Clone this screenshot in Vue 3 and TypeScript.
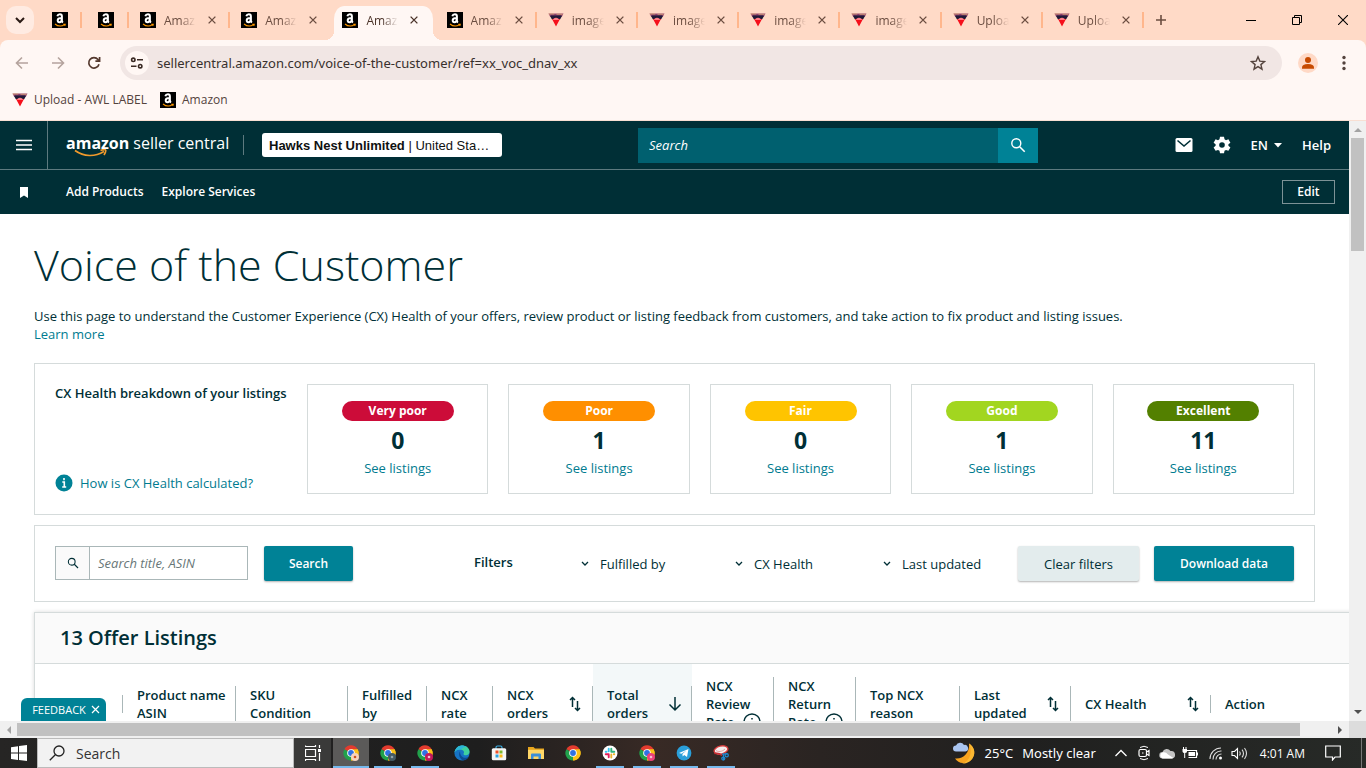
<script setup lang="ts">
import { ref } from 'vue'

interface Tab { title: string; icon: 'amazon' | 'label'; active?: boolean }
interface Rating { name: string; count: number; tone: string }
interface Column { lines: string[]; width: number; sort?: 'both' | 'down'; info?: boolean; selected?: boolean }
interface TaskApp { name: string; icon: string; open?: boolean; focused?: boolean; badge?: string; letter?: string }

const tabs: Tab[] = [
  { title: 'Amaz', icon: 'amazon' },
  { title: 'Amaz', icon: 'amazon' },
  { title: 'Amaz', icon: 'amazon', active: true },
  { title: 'Amaz', icon: 'amazon' },
  { title: 'image', icon: 'label' },
  { title: 'image', icon: 'label' },
  { title: 'image', icon: 'label' },
  { title: 'image', icon: 'label' },
  { title: 'Uploa', icon: 'label' },
  { title: 'Uploa', icon: 'label' },
]

const ratings: Rating[] = [
  { name: 'Very poor', count: 0, tone: 'very-poor' },
  { name: 'Poor', count: 1, tone: 'poor' },
  { name: 'Fair', count: 0, tone: 'fair' },
  { name: 'Good', count: 1, tone: 'good' },
  { name: 'Excellent', count: 11, tone: 'excellent' },
]

const columns: Column[] = [
  { lines: [''], width: 88 },
  { lines: ['Product name', 'ASIN'], width: 113 },
  { lines: ['SKU', 'Condition'], width: 112 },
  { lines: ['Fulfilled', 'by'], width: 79 },
  { lines: ['NCX', 'rate'], width: 66 },
  { lines: ['NCX', 'orders'], width: 100, sort: 'both' },
  { lines: ['Total', 'orders'], width: 99, sort: 'down', selected: true },
  { lines: ['NCX', 'Review', 'Rate'], width: 82, info: true },
  { lines: ['NCX', 'Return', 'Rate'], width: 82, info: true },
  { lines: ['Top NCX', 'reason'], width: 104 },
  { lines: ['Last', 'updated'], width: 111, sort: 'both' },
  { lines: ['CX Health'], width: 140, sort: 'both' },
  { lines: ['Action'], width: 172 },
]

const apps: TaskApp[] = [
  { name: 'Chrome, first profile', icon: 'chrome', open: true, focused: true, badge: '#f6d3bd', letter: '#c8501e' },
  { name: 'Chrome, second profile', icon: 'chrome', open: true, badge: '#455a64', letter: '#90a4ae' },
  { name: 'Chrome, third profile', icon: 'chrome', open: true, badge: '#c2185b', letter: '#f8bbd0' },
  { name: 'Edge', icon: 'edge' },
  { name: 'Store', icon: 'store' },
  { name: 'File Explorer', icon: 'folder' },
  { name: 'Chrome', icon: 'chrome' },
  { name: 'Slack', icon: 'slack', open: true },
  { name: 'Chrome, fourth profile', icon: 'chrome', open: true, badge: '#ec407a', letter: '#f8bbd0' },
  { name: 'Telegram', icon: 'telegram', open: true },
  { name: 'Snipping Tool', icon: 'snip', open: true },
]

const filters = ['Fulfilled by', 'CX Health', 'Last updated']
const address = ref('sellercentral.amazon.com/voice-of-the-customer/ref=xx_voc_dnav_xx')
const siteQuery = ref('')
const listingQuery = ref('')
</script>

<template>
  <svg class="defs" aria-hidden="true">
    <symbol id="i-amazon" viewBox="0 0 16 16">
      <rect width="16" height="16" fill="#000" />
      <path d="M9.700 6.100c-2.800 0-4 .7-4 2.200 0 1.200.8 1.900 1.800 1.900 1.300 0 2.200-1 2.200-2.600zM5.300 4.300C5.700 2.900 6.600 2.300 7.900 2.300c1.500 0 2 .7 2 2.200v4c0 1 .3 1.500 1.100 2" fill="none" stroke="#fff" stroke-width="2" />
      <path d="M3 12c3 2.400 6.800 2.400 9.600.6M11.300 12.200h1.900l-.4 1.600" fill="none" stroke="#f90" stroke-width="1.100" />
    </symbol>
    <symbol id="i-label" viewBox="0 0 16 16">
      <path d="M.5 1.500h15L14 4.500H2z" fill="#9a4570" />
      <path d="M2 4h12l-1.800 3.200H3.800z" fill="#211936" />
      <path d="M.8 2h5.500M8.500 2.300h6" stroke="#dba878" stroke-width=".9" />
      <path d="M2.500 3.400h11" stroke="#33204a" stroke-width=".8" />
      <path d="M4 7h8l-4 7.500z" fill="#f5101c" />
      <path d="M5.200 7q2.800-2.500 5.600 0v1H5.200z" fill="#ff7d86" />
    </symbol>
    <symbol id="i-close" viewBox="0 0 16 16">
      <path d="M3.500 3.500l9 9M12.500 3.500l-9 9" stroke="currentColor" stroke-width="1.800" />
    </symbol>
    <symbol id="i-search" viewBox="0 0 16 16">
      <circle cx="6.300" cy="6.300" r="4.500" fill="none" stroke="currentColor" stroke-width="1.400" />
      <path d="M9.700 9.700l5 5" stroke="currentColor" stroke-width="1.600" />
    </symbol>
    <symbol id="i-sort" viewBox="0 0 12 16">
      <path d="M3.500 11V1.500M1 4l2.500-2.500L6 4M8.500 5v9.500M6 12l2.500 2.500L11 12" fill="none" stroke="currentColor" stroke-width="1.500" />
    </symbol>
    <symbol id="i-down" viewBox="0 0 14 16">
      <path d="M7 1v13M1.500 8.500L7 14l5.500-5.500" fill="none" stroke="currentColor" stroke-width="1.500" />
    </symbol>
    <symbol id="i-chrome" viewBox="0 0 16 16">
      <path d="M8 8L1.400 4.200A7.600 7.600 0 0 1 14.600 4.200z" fill="#e33b2e" />
      <path d="M8 8l6.600-3.800A7.600 7.600 0 0 1 8 15.600z" fill="#fbc116" />
      <path d="M8 8v7.600A7.600 7.600 0 0 1 1.400 4.200z" fill="#21a14b" />
      <path d="M8 4.300h6.600A7.600 7.600 0 0 1 8 15.600l3.300-5.700z" fill="#fbc116" />
      <circle cx="8" cy="8" r="3.800" fill="#fff" />
      <circle cx="8" cy="8" r="2.900" fill="#2f72e4" />
    </symbol>
    <symbol id="i-edge" viewBox="0 0 16 16">
      <circle cx="8" cy="8" r="7.600" fill="#1673c4" />
      <path d="M.5 7.500C1.300 3.200 4.300.4 8 .4c4.200 0 7.600 2.800 7.600 6.200 0 2.300-1.700 3.700-3.700 3.700-1.400 0-2.400-.6-2.400-1.300 0-.5.5-.8.500-1.700C10 5.500 8 4.500 5.900 4.500 3.400 4.500 1.300 5.700.5 7.500z" fill="#3fd0a0" />
      <path d="M.5 7.500C1.300 3.200 4.300.4 8 .4c2 0 3.700.6 5 1.600C8 1.500 9 4.500 5.900 4.500 3.400 4.500 1.300 5.700.5 7.500z" fill="#2bb5d8" />
      <path d="M6 6.500C4 9 5.500 13.500 9 15.500c2.500-.2 4.500-1.400 5.700-3.400-1.500.8-3.600 1-5.400.3C7.300 11.500 6 9.500 6 6.500z" fill="#0c4b93" />
    </symbol>
    <symbol id="i-store" viewBox="0 0 16 16">
      <path d="M5 4V2.500q0-1.500 1.500-1.500h3q1.500 0 1.500 1.500V4" fill="none" stroke="#3bb1e8" stroke-width="1.200" />
      <rect x=".8" y="3.300" width="14.400" height="12" rx="1.500" fill="#f5f5f5" />
      <path d="M4.500 5.500h3v3h-3z" fill="#f0522a" /><path d="M8.500 5.500h3v3h-3z" fill="#7db92c" />
      <path d="M4.500 9.500h3v3h-3z" fill="#2aa4e4" /><path d="M8.500 9.500h3v3h-3z" fill="#fbb917" />
    </symbol>
    <symbol id="i-folder" viewBox="0 0 16 16">
      <path d="M0 2h5.500L7 3.500h9V14H0z" fill="#e8a51c" />
      <path d="M0 4.800h16V14H0z" fill="#ffd767" />
      <path d="M3 14V9.500q0-1 1-1h8q1 0 1 1V14h-2.500v-2.500h-5V14z" fill="#3d8fd8" />
    </symbol>
    <symbol id="i-slack" viewBox="0 0 16 16">
      <circle cx="8" cy="8" r="7.500" fill="#fff" />
      <g fill="none" stroke-width="1.900" stroke-linecap="round">
        <path d="M6.700 3.700v2.500M3.700 6.700h.8" stroke="#36c5f0" />
        <path d="M9.300 6.700h3M9.300 3.700v3" stroke="#2eb67d" />
        <path d="M9.300 9.500v3M12.300 9.300h-.5" stroke="#ecb22e" />
        <path d="M6.700 9.300h-3M6.700 9.300v3" stroke="#e01e5a" />
      </g>
    </symbol>
    <symbol id="i-telegram" viewBox="0 0 16 16">
      <circle cx="8" cy="8" r="7.400" fill="#2a9fda" />
      <path d="M3 8l9.500-3.900-1.500 8-2.800-2-1.500 1.500-.3-2.500 4-3.500-5 3.100z" fill="#fff" />
    </symbol>
    <symbol id="i-snip" viewBox="0 0 16 16">
      <ellipse cx="8" cy="5" rx="7" ry="4" fill="#f6eeee" stroke="#d63c3c" stroke-width="1.400" transform="rotate(-14 8 5)" />
      <path d="M3 5.500c2 1.500 6 1.500 9-1.500" fill="none" stroke="#e2a0a0" stroke-width="1" />
      <path d="M1.500 8.500C4 8 7 8.500 9 10.500" fill="none" stroke="#c62f36" stroke-width="1.500" />
      <path d="M10.500 8.500v6.500M9 9.200l5.500-.4" stroke="#1e88d0" stroke-width="1.300" />
      <circle cx="13.700" cy="10.300" r="1.600" fill="none" stroke="#1e88d0" stroke-width="1.300" />
      <circle cx="10.300" cy="13.600" r="1.500" fill="none" stroke="#1e88d0" stroke-width="1.300" />
    </symbol>
  </svg>

  <div class="desktop">
    <header class="browser">
      <div class="strip">
        <button class="tab-menu" aria-label="Search tabs">
          <svg width="10" height="8" viewBox="0 0 10 8"><path d="M1 2l4 4 4-4" fill="none" stroke="currentColor" stroke-width="2" /></svg>
        </button>
        <div class="pinned"><svg class="fav"><use href="#i-amazon" /></svg></div>
        <div class="pinned"><svg class="fav"><use href="#i-amazon" /></svg></div>
        <div class="tabs">
          <div v-for="(tab, i) in tabs" :key="i" class="tab" :class="{ active: tab.active, bare: tabs[i + 1]?.active }">
            <svg class="fav"><use :href="'#i-' + tab.icon" /></svg>
            <span class="tab-title">{{ tab.title }}</span>
            <button class="tab-close" aria-label="Close tab"><svg><use href="#i-close" /></svg></button>
          </div>
        </div>
        <div class="window-side">
          <button class="new-tab" aria-label="New tab">
            <svg width="12" height="12" viewBox="0 0 12 12"><path d="M6 1v10M1 6h10" stroke="currentColor" stroke-width="1.600" /></svg>
          </button>
          <div class="window-buttons">
            <button aria-label="Minimize"><svg width="10" height="10" viewBox="0 0 10 10"><path d="M0 5.500h10" stroke="#000" /></svg></button>
            <button aria-label="Restore"><svg width="10" height="10" viewBox="0 0 10 10"><path d="M.5 2.500h7v7h-7zM2.500 2.500v-2h7v7h-2" fill="none" stroke="#000" /></svg></button>
            <button aria-label="Close window"><svg width="10" height="10" viewBox="0 0 10 10"><path d="M0 0l10 10M10 0L0 10" stroke="#000" stroke-width="1.100" /></svg></button>
          </div>
        </div>
      </div>

      <div class="toolbar">
        <div class="nav-buttons">
          <button class="dim" aria-label="Back"><svg width="14" height="14" viewBox="0 0 14 14"><path d="M13 7H2M7 1.500L1.500 7 7 12.500" fill="none" stroke="currentColor" stroke-width="1.600" /></svg></button>
          <button class="dim" aria-label="Forward"><svg width="14" height="14" viewBox="0 0 14 14"><path d="M1 7h11M7 1.500L12.500 7 7 12.500" fill="none" stroke="currentColor" stroke-width="1.600" /></svg></button>
          <button aria-label="Reload"><svg width="14" height="14" viewBox="0 0 14 14"><path d="M12 8.200A5.200 5.200 0 1 1 11 3.500l1.300 1.300M12.600 1v4.200H8.400" fill="none" stroke="currentColor" stroke-width="1.700" /></svg></button>
        </div>
        <div class="omnibox">
          <button class="site-info" aria-label="Site information">
            <svg width="14" height="14" viewBox="0 0 14 14"><g fill="none" stroke="#3a2a24" stroke-width="1.600"><circle cx="3.300" cy="3.800" r="1.700" /><path d="M7 3.800h6M1 10.200h5.500" /><circle cx="10.200" cy="10.200" r="1.700" /></g></svg>
          </button>
          <input v-model="address" class="address" type="text" aria-label="Address" />
          <button class="star" aria-label="Bookmark this page">
            <svg width="16" height="16" viewBox="0 0 16 16"><path d="M8 1.800l1.800 4.300 4.700.4-3.600 3.100 1.100 4.600L8 11.700l-4 2.500 1.100-4.600L1.500 6.500l4.700-.4z" fill="none" stroke="#54433d" stroke-width="1.400" /></svg>
          </button>
        </div>
        <button class="profile" aria-label="Profile">
          <svg width="20" height="20" viewBox="0 0 20 20"><circle cx="10" cy="10" r="10" fill="#ffd9c6" /><circle cx="10" cy="7" r="3" fill="#c74a00" /><path d="M4 15.800v-1.300q0-3.500 6-3.500t6 3.500v1.300z" fill="#c74a00" /></svg>
        </button>
        <button class="kebab" aria-label="Menu">
          <svg width="4" height="16" viewBox="0 0 4 16"><g fill="#54433d"><circle cx="2" cy="2.500" r="1.700" /><circle cx="2" cy="8" r="1.700" /><circle cx="2" cy="13.500" r="1.700" /></g></svg>
        </button>
      </div>

      <nav class="bookmarks" aria-label="Bookmarks">
        <a href="#"><svg class="fav"><use href="#i-label" /></svg>Upload - AWL LABEL</a>
        <a href="#"><svg class="fav"><use href="#i-amazon" /></svg>Amazon</a>
      </nav>
    </header>

    <div class="viewport">
      <div class="view">
        <div class="masthead">
          <button class="burger" aria-label="Menu">
            <svg width="16" height="12" viewBox="0 0 16 12"><path d="M0 1.500h16M0 6h16M0 10.500h16" stroke="#fff" stroke-width="1.600" /></svg>
          </button>
          <a class="brand" href="#">
            <b>amazon</b><span>seller central</span>
            <svg class="smile" width="34" height="9" viewBox="0 0 34 9"><path d="M1 1.500c9 6.500 20 6.500 29 1M26.500 1.500q4-1.500 5-.5t-1.500 5" fill="none" stroke="#f09a2c" stroke-width="1.700" /></svg>
          </a>
          <button class="account"><b>Hawks Nest Unlimited</b> | United Sta…</button>
          <form class="site-search" role="search" @submit.prevent>
            <input v-model="siteQuery" type="text" placeholder="Search" aria-label="Search Seller Central" />
            <button aria-label="Search Seller Central"><svg width="16" height="16"><use href="#i-search" /></svg></button>
          </form>
          <div class="utilities">
            <button aria-label="Messages">
              <svg width="18" height="16" viewBox="0 0 18 16"><rect x=".5" y="1" width="17" height="14" rx="1.500" fill="#fff" /><path d="M2.500 3.500L9 9l6.500-5.500" fill="none" stroke="#002f36" stroke-width="1.600" /></svg>
            </button>
            <button aria-label="Settings">
              <svg width="18" height="18" viewBox="0 0 18 18"><path d="M7 .8h4l.5 2.500 1.500.9 2.400-.9 2 3.400-2 1.600v1.500l2 1.600-2 3.400-2.400-.9-1.500.9-.5 2.500H7l-.5-2.500-1.500-.9-2.400.9-2-3.400 2-1.600V8.300l-2-1.600 2-3.400 2.400.9 1.500-.9z" fill="#fff" /><circle cx="9" cy="9" r="2.800" fill="#002f36" /></svg>
            </button>
            <button class="lang">EN <svg width="8" height="5" viewBox="0 0 8 5"><path d="M0 0h8L4 4.500z" fill="#fff" /></svg></button>
            <a href="#">Help</a>
          </div>
        </div>
        <nav class="shortcuts" aria-label="Favorites">
          <svg class="flag" width="8" height="11" viewBox="0 0 8 11"><path d="M0 0h8v11L4 8.500 0 11z" fill="#fff" /></svg>
          <a href="#">Add Products</a>
          <a href="#">Explore Services</a>
          <button>Edit</button>
        </nav>

        <main>
          <h1>Voice of the Customer</h1>
          <p class="intro">Use this page to understand the Customer Experience (CX) Health of your offers, review product or listing feedback from customers, and take action to fix product and listing issues.<br /><a href="#">Learn more</a></p>

          <section class="panel health">
            <div class="health-lead">
              <h2>CX Health breakdown of your listings</h2>
              <a class="how" href="#">
                <svg width="18" height="18" viewBox="0 0 18 18"><circle cx="9" cy="9" r="8.500" fill="#008296" /><path d="M9 4v2.200M7.300 8H9.300v5M7.200 13h4" fill="none" stroke="#fff" stroke-width="1.600" /></svg>
                How is CX Health calculated?
              </a>
            </div>
            <div v-for="rating in ratings" :key="rating.name" class="card">
              <span class="pill" :class="rating.tone">{{ rating.name }}</span>
              <strong>{{ rating.count }}</strong>
              <a href="#">See listings</a>
            </div>
          </section>

          <section class="panel finder">
            <label class="listing-search">
              <span class="glass"><svg width="12" height="12"><use href="#i-search" /></svg></span>
              <input v-model="listingQuery" type="text" placeholder="Search title, ASIN" aria-label="Search title, ASIN" />
            </label>
            <button class="btn primary">Search</button>
            <b class="filters-title">Filters</b>
            <div class="filters">
              <label v-for="name in filters" :key="name" class="filter">
                <svg width="8" height="6" viewBox="0 0 8 6"><path d="M1 1l3 3 3-3" fill="none" stroke="#002f36" stroke-width="1.300" /></svg>
                <select :aria-label="name"><option>{{ name }}</option></select>
              </label>
            </div>
            <button class="btn plain">Clear filters</button>
            <button class="btn primary download">Download data</button>
          </section>

          <section class="listings">
            <h2>13 Offer Listings</h2>
            <table>
              <colgroup><col v-for="(col, i) in columns" :key="i" :style="{ width: col.width + 'px' }" /></colgroup>
              <thead>
                <tr>
                  <th v-for="(col, i) in columns" :key="i" scope="col" :class="{ selected: col.selected }">
                    <div class="head" :class="{ last: i === columns.length - 1 }">
                      <span class="head-text"><span v-for="line in col.lines" :key="line" class="line">{{ line }}</span></span>
                      <svg v-if="col.sort === 'both'" class="sort"><use href="#i-sort" /></svg>
                      <svg v-if="col.sort === 'down'" class="down"><use href="#i-down" /></svg>
                      <svg v-if="col.info" class="info" viewBox="0 0 18 18"><circle cx="9" cy="9" r="8" fill="none" stroke="currentColor" stroke-width="1.400" /><path d="M9 5v1.500M9 8v5.500" stroke="currentColor" stroke-width="1.500" /></svg>
                    </div>
                  </th>
                </tr>
              </thead>
            </table>
          </section>
        </main>
        <button class="feedback">FEEDBACK<svg width="9" height="9" viewBox="0 0 9 9"><path d="M1 1l7 7M8 1L1 8" stroke="#fff" stroke-width="1.200" /></svg></button>
      </div>

      <div class="scroll-y" aria-hidden="true">
        <svg width="8" height="4" viewBox="0 0 8 4"><path d="M0 4h8L4 0z" fill="#a3a3a3" /></svg>
        <i></i>
        <svg width="8" height="4" viewBox="0 0 8 4"><path d="M0 0h8L4 4z" fill="#505050" /></svg>
      </div>
      <div class="scroll-x" aria-hidden="true">
        <svg width="4" height="8" viewBox="0 0 4 8"><path d="M4 0v8L0 4z" fill="#a3a3a3" /></svg>
        <i></i>
        <svg width="4" height="8" viewBox="0 0 4 8"><path d="M0 0v8l4-4z" fill="#505050" /></svg>
      </div>
      <div class="corner"></div>
    </div>

    <footer class="taskbar">
      <button class="start" aria-label="Start">
        <svg width="16" height="16" viewBox="0 0 16 16"><path d="M0 2.200l7-1v6.400H0zM8 1.100L16 0v7.600H8zM0 8.500h7v6.400l-7-1zM8 8.500h8V16l-8-1.100z" fill="#fff" /></svg>
      </button>
      <label class="task-search">
        <svg width="16" height="16" viewBox="0 0 16 16"><circle cx="10" cy="6" r="5" fill="none" stroke="#222" stroke-width="1.300" /><path d="M6.300 9.700L.8 15.200" stroke="#222" stroke-width="1.300" /></svg>
        <input type="text" placeholder="Search" aria-label="Search Windows" />
      </label>
      <button class="task-view" aria-label="Task view">
        <svg width="16" height="16" viewBox="0 0 16 16"><path d="M.5 4.500h10v7H.5zM.5 2V.5M.5 1.500h10V0M.5 16v-1.500h10V16M14.500 0v3M14.500 8v8" fill="none" stroke="#fff" stroke-width="1.200" /><rect x="13" y="4" width="3" height="3" fill="#fff" /></svg>
      </button>
      <button v-for="app in apps" :key="app.name" class="app" :class="{ open: app.open, focused: app.focused }" :aria-label="app.name">
        <svg width="18" height="18" viewBox="0 0 18 18">
          <use :href="'#i-' + app.icon" x="1" y="1" width="16" height="16" />
          <template v-if="app.badge">
            <circle cx="13" cy="13" r="4" :fill="app.badge" />
            <circle cx="13" cy="13" r="1.300" :fill="app.letter" />
          </template>
        </svg>
      </button>
      <div class="tray">
        <button class="weather">
          <svg width="24" height="24" viewBox="0 0 24 24"><path d="M17 2.500A10.500 10.500 0 1 1 3 17.500C12 18.500 18 11 17 2.500z" fill="#f7a31f" /><path d="M17 2.500c5 3 7 9 4 14-2 4-7 6.500-11 6 8-2 11-12 7-20z" fill="#fbb832" /><path d="M4 10.500a3 3 0 0 1 0-6A4.500 4.500 0 0 1 12 4a3.300 3.300 0 0 1 1.500 6.500z" fill="#a9c4f0" /></svg>
          <span>25°C</span><span>Mostly clear</span>
        </button>
        <svg class="t1" width="12" height="8" viewBox="0 0 12 8"><path d="M.5 7L6 1.500 11.500 7" fill="none" stroke="#fff" stroke-width="1.300" /></svg>
        <svg class="t2" width="12" height="16" viewBox="0 0 12 16"><path d="M2 2.500q4-2.500 8 0M2 13.500q4 2.500 8 0" fill="none" stroke="#fff" /><rect x="1" y="4.500" width="7.500" height="7" rx="1.500" fill="none" stroke="#fff" stroke-width="1.200" /><path d="M8.500 7l2.500-1.500v5L8.500 9M4 8h1.500" fill="none" stroke="#fff" stroke-width="1.200" /></svg>
        <svg class="t3" width="16" height="11" viewBox="0 0 16 11"><path d="M3.500 10.500a3.200 3.200 0 0 1 0-6.400A4.500 4.500 0 0 1 11.500 3 3.800 3.800 0 0 1 13 10.500z" fill="#c4c4c4" /><path d="M3.500 10.500a3.200 3.200 0 0 1 .5-6.200q3-.5 5 2.200l5.500 3.500-1.500.5z" fill="#fff" /></svg>
        <svg class="t4" width="16" height="12" viewBox="0 0 16 12"><path d="M4.500 3.500h10v7h-8" fill="none" stroke="#fff" stroke-width="1.200" /><path d="M6.500 5h6.500v4H6.500zM15 5.500h1v3h-1zM.5 2h4.500v2.500q0 1.500-2.200 1.500T.5 4.500z" fill="#fff" /><path d="M1.500 0v2M4 0v2M2.700 6v5" stroke="#fff" /></svg>
        <svg class="t5" width="14" height="13" viewBox="0 0 14 13"><path d="M1 12A11 11 0 0 1 12 1M4 12.500A8 8 0 0 1 12.500 4M7 12.500A5.500 5.500 0 0 1 12.500 7" fill="none" stroke="#ddd" stroke-width="1.100" /><circle cx="11.500" cy="11" r="1.500" fill="#fff" /></svg>
        <svg class="t6" width="17" height="13" viewBox="0 0 17 13"><path d="M1 4.500h2.500L6.500 1.500v10l-3-3H1z" fill="none" stroke="#fff" stroke-width="1.100" /><path d="M8.500 4.500q1.500 2 0 4M11 2.700q3 3.800 0 7.600M13.500 1q4 5.500 0 11" fill="none" stroke="#ddd" stroke-width="1.100" /></svg>
        <span class="clock">4:01 AM</span>
        <svg class="note" width="16" height="16" viewBox="0 0 16 16"><path d="M.7 1h14.600v11H10l-2.500 3v-3H.7z" fill="none" stroke="#fff" stroke-width="1.200" /></svg>
        <i class="peek"></i>
      </div>
    </footer>
  </div>
</template>

<style>
body { margin: 0; overflow: hidden; }
</style>

<style scoped>
* { box-sizing: border-box; }
.defs { position: absolute; width: 0; height: 0; }
.desktop {
  --ui: "Open Sans", "Noto Sans", sans-serif;
  --wide: "Noto Sans", "Open Sans", sans-serif;
  display: flex; flex-direction: column; height: 100vh; overflow: hidden;
  font-family: var(--ui); background: #fff;
}
button, input, select { font: inherit; color: inherit; margin: 0; padding: 0; border: 0; background: none; outline: 0; }
button { display: inline-flex; align-items: center; justify-content: center; flex: none; }
svg { flex: none; display: block; }
a { text-decoration: none; color: inherit; }
.fav { width: 16px; height: 16px; }

.browser { flex: none; background: #ffdac7; border-bottom: 1px solid #f8dfd3; }
.strip { display: flex; height: 40px; }
.tab-menu { width: 28px; height: 28px; margin: 6px 2px 0 6px; border-radius: 10px; background: #ffebe2; color: #2a1a14; }
.pinned { width: 46px; display: flex; align-items: center; padding-left: 16px; background: linear-gradient(#ffb68c, #ffb68c) right center / 2px 16px no-repeat; }
.pinned + .pinned { width: 47px; }
.tabs { flex: 1; display: flex; min-width: 0; }
.tab { flex: 1; min-width: 0; display: flex; align-items: center; padding-left: 11px; color: #6b4d40; font-size: 12px; background: linear-gradient(#ffb68c, #ffb68c) right center / 2px 16px no-repeat; }
.tab.bare { background: none; }
.tab.active {
  position: relative; margin-top: 6px; padding-bottom: 6px; padding-left: 8px;
  border: solid transparent; border-width: 0 3px; border-radius: 13px 13px 0 0;
  background: #fff7f4; background-clip: padding-box; color: #4a3228;
}
.tab.active::before, .tab.active::after { content: ""; position: absolute; bottom: 0; width: 9px; height: 9px; }
.tab.active::before { right: 100%; background: radial-gradient(circle at 0 0, transparent 9px, #fff7f4 9px); }
.tab.active::after { left: 100%; background: radial-gradient(circle at 100% 0, transparent 9px, #fff7f4 9px); }
.tab-title { width: 32px; margin-left: 8px; white-space: nowrap; mask-image: linear-gradient(90deg, #000 50%, transparent); }
.tab-close { width: 16px; height: 16px; margin-left: 8px; }
.tab-close svg { width: 12px; height: 12px; }
.window-side { display: flex; width: 222px; justify-content: space-between; align-items: center; }
.new-tab { width: 34px; height: 34px; color: #6b4d40; }
.window-buttons { display: flex; }
.window-buttons button { width: 46px; height: 40px; }

.toolbar { display: flex; align-items: center; height: 46px; background: #fff7f4; border-radius: 8px 8px 0 0; }
.nav-buttons { display: flex; width: 120px; padding-left: 4px; }
.nav-buttons button { width: 36px; height: 36px; color: #54382d; }
.nav-buttons .dim { color: #b5a39d; }
.omnibox { flex: 1; min-width: 0; height: 34px; display: flex; align-items: center; border-radius: 17px; background: #f1e6e4; padding: 0 6px 0 5px; }
.site-info { width: 24px; height: 24px; border-radius: 50%; background: #fff7f4; }
.address { flex: 1; min-width: 0; margin-left: 8px; font-family: var(--wide); font-size: 13px; color: #38302d; }
.star { width: 36px; height: 24px; }
.profile { width: 52px; height: 34px; }
.kebab { width: 20px; height: 34px; margin-right: 12px; }
.bookmarks { display: flex; gap: 13px; height: 34px; padding: 0 12px 7px; background: #fff7f4; font-size: 12px; color: #54433d; }
.bookmarks a { display: flex; align-items: center; gap: 6px; }

.viewport { flex: 1; min-height: 0; display: grid; grid-template-columns: minmax(0, 1fr) 17px; grid-template-rows: minmax(0, 1fr) 17px; }
.view { position: relative; overflow: hidden; color: #002f36; font-size: 13px; line-height: 18px; background: #fff; }
.view a { color: #007b8f; }
.view .masthead a, .view .shortcuts a { color: #fff; }
.masthead { display: flex; align-items: center; height: 49px; background: #002f36; border-bottom: 1px solid #5d7a7f; color: #fff; }
.burger { width: 48px; height: 48px; border-right: 1px solid #5d7a7f; }
.brand { position: relative; display: flex; gap: 4px; margin-left: 18px; width: 178px; font-size: 16px; border-right: 1px solid #5d7a7f; height: 20px; line-height: 16px; white-space: nowrap; }
.smile { position: absolute; left: 8px; top: 14px; }
.account { display: block; width: 240px; height: 24px; margin-left: 18px; padding-left: 7px; border-radius: 3px; background: #fff; color: #0f1111; font: 13px "Liberation Sans", sans-serif; white-space: nowrap; text-align: left; }
.site-search { display: flex; margin-left: 136px; width: 400px; height: 35px; }
.site-search input { flex: 1; min-width: 0; padding-left: 11px; background: #00606f; color: #fff; }
.site-search input::placeholder { color: #fff; opacity: 1; font-style: italic; }
.site-search button { width: 40px; background: #008296; }
.utilities { display: flex; align-items: center; gap: 20px; margin-left: auto; padding-right: 18px; font-weight: 600; }
.lang { gap: 6px; }
.shortcuts { display: flex; align-items: center; gap: 18px; height: 44px; padding: 0 14px 0 20px; background: #002f36; color: #fff; font-size: 12px; font-weight: 600; }
.flag { margin-right: 20px; }
.shortcuts button { margin-left: auto; width: 53px; height: 24px; border: 1px solid #7d9296; }

main { padding: 0 34px; }
h1 { margin: 0; padding-top: 23px; font-size: 43px; font-weight: 300; line-height: 56px; }
.intro { margin: 14px 0 0; }
.panel { border: 1px solid #d5dbdb; padding: 20px; }
.health { display: flex; gap: 20px; margin-top: 20px; }
.health-lead { width: 232px; flex: none; display: flex; flex-direction: column; justify-content: space-between; padding-bottom: 2px; white-space: nowrap; }
h2 { margin: 0; font-size: 13px; font-weight: 600; }
.how { display: flex; align-items: center; gap: 7px; }
.card { flex: 1; height: 110px; border: 1px solid #d5dbdb; display: flex; flex-direction: column; align-items: center; padding-top: 16px; }
.pill { width: 112px; height: 20px; border-radius: 10px; color: #fff; font-size: 12px; font-weight: 700; text-align: center; line-height: 20px; }
.very-poor { background: #cc0c39; }
.poor { background: #ff8f00; }
.fair { background: #ffc400; }
.good { background: #a2d620; }
.excellent { background: #538000; }
.card strong { font-size: 23px; line-height: 28px; margin: 5px 0; }

.finder { display: flex; align-items: flex-start; margin-top: 10px; }
.listing-search { display: flex; width: 193px; height: 34px; border: 1px solid #aab7b8; }
.glass { width: 34px; display: flex; align-items: center; justify-content: center; background: #fafafa; border-right: 1px solid #aab7b8; }
.listing-search input { flex: 1; min-width: 0; padding-left: 8px; }
.listing-search input::placeholder { color: #687778; font-style: italic; opacity: 1; }
.btn { height: 35px; border-radius: 2px; box-shadow: 0 1px 2px rgba(0, 0, 0, .3); }
.primary { background: #008296; color: #fff; width: 89px; margin-left: 16px; font-size: 12px; font-weight: 600; }
.plain { background: #e3eced; width: 121px; }
.download { width: 140px; margin-left: 15px; }
.filters-title { margin: 7px 0 0 121px; width: 38px; font-weight: 600; }
.filters { flex: 1; display: flex; gap: 69px; margin-left: 69px; height: 35px; align-items: center; }
.filter { display: flex; align-items: center; gap: 11px; }
.filter select { appearance: none; }

.listings { width: 1350px; margin-top: 10px; border: 1px solid #d5dbdb; box-shadow: 0 0 4px rgba(0, 0, 0, .15); }
.listings h2 { height: 51px; padding-left: 25px; background: #fafafa; border-bottom: 1px solid #d5dbdb; font-size: 20px; line-height: 50px; }
table { width: 1348px; table-layout: fixed; border-collapse: collapse; }
th { height: 80px; padding: 0; text-align: left; vertical-align: middle; font-weight: 600; }
.selected { background: #f3f8f9; }
.head { position: relative; display: flex; align-items: center; border-right: 1px solid #aab7b8; padding-left: 14px; min-height: 18px; }
.head.last { border: 0; }
.head-text { flex: 1; }
.line { display: block; white-space: nowrap; }
.sort { width: 12px; height: 16px; margin-right: 11px; }
.down { width: 14px; height: 16px; margin-right: 9px; }
.info { width: 18px; height: 18px; position: absolute; right: 12px; bottom: 0; }
.feedback { position: absolute; left: 21px; bottom: 0; height: 23px; width: 85px; padding-left: 5px; gap: 5px; border-radius: 6px 6px 0 0; background: #008296; color: #fff; font-size: 11px; }

.scroll-y { background: #f0f0f0; display: flex; flex-direction: column; align-items: center; padding: 7px 0; }
.scroll-y i { width: 13px; height: 113px; margin-top: 6px; margin-bottom: auto; background: #c1c1c1; }
.scroll-x { background: #f0f0f0; display: flex; align-items: center; padding: 0 7px 0 7px; }
.scroll-x i { flex: 1; height: 13px; margin: 0 38px 0 6px; background: #c1c1c1; }
.corner { background: #dcdcdc; }

.taskbar { flex: none; display: flex; align-items: stretch; height: 30px; background: linear-gradient(90deg, #262524, #1e1e1e 35%, #382a25 48%, #2a2422 60%, #20201f 75%, #272a27); color: #fff; }
.start { width: 37px; }
.task-search { width: 257px; display: flex; align-items: center; padding-left: 11px; background: #f2f2f2; border: 1px solid #bbb; color: #222; }
.task-search input { width: 180px; margin-left: 11px; font-size: 14px; }
.task-search input::placeholder { color: #333; opacity: 1; }
.task-view { width: 37px; background: #3a3a39; margin-right: 2px; }
.app { width: 36px; margin-right: 1px; background: linear-gradient(#76b9ed, #76b9ed) center bottom / 28px 2px no-repeat; }
.app:not(.open) { background: none; }
.app.focused { background: linear-gradient(#76b9ed, #76b9ed) center bottom / 36px 2px no-repeat, #5b5a59; }
.tray { margin-left: auto; display: flex; align-items: center; font-family: var(--wide); font-size: 13px; white-space: nowrap; }
.weather { gap: 9px; margin-right: 19px; }
.t1 { margin-right: 11px; } .t2 { margin-right: 9px; } .t3 { margin-right: 7px; } .t4 { margin-right: 11px; } .t5 { margin-right: 8px; } .t6 { margin-right: 12px; }
.clock { font-family: var(--ui); font-size: 12px; }
.note { margin: 0 20px; }
.peek { width: 1px; height: 30px; background: #777; margin-right: 4px; }
</style>
